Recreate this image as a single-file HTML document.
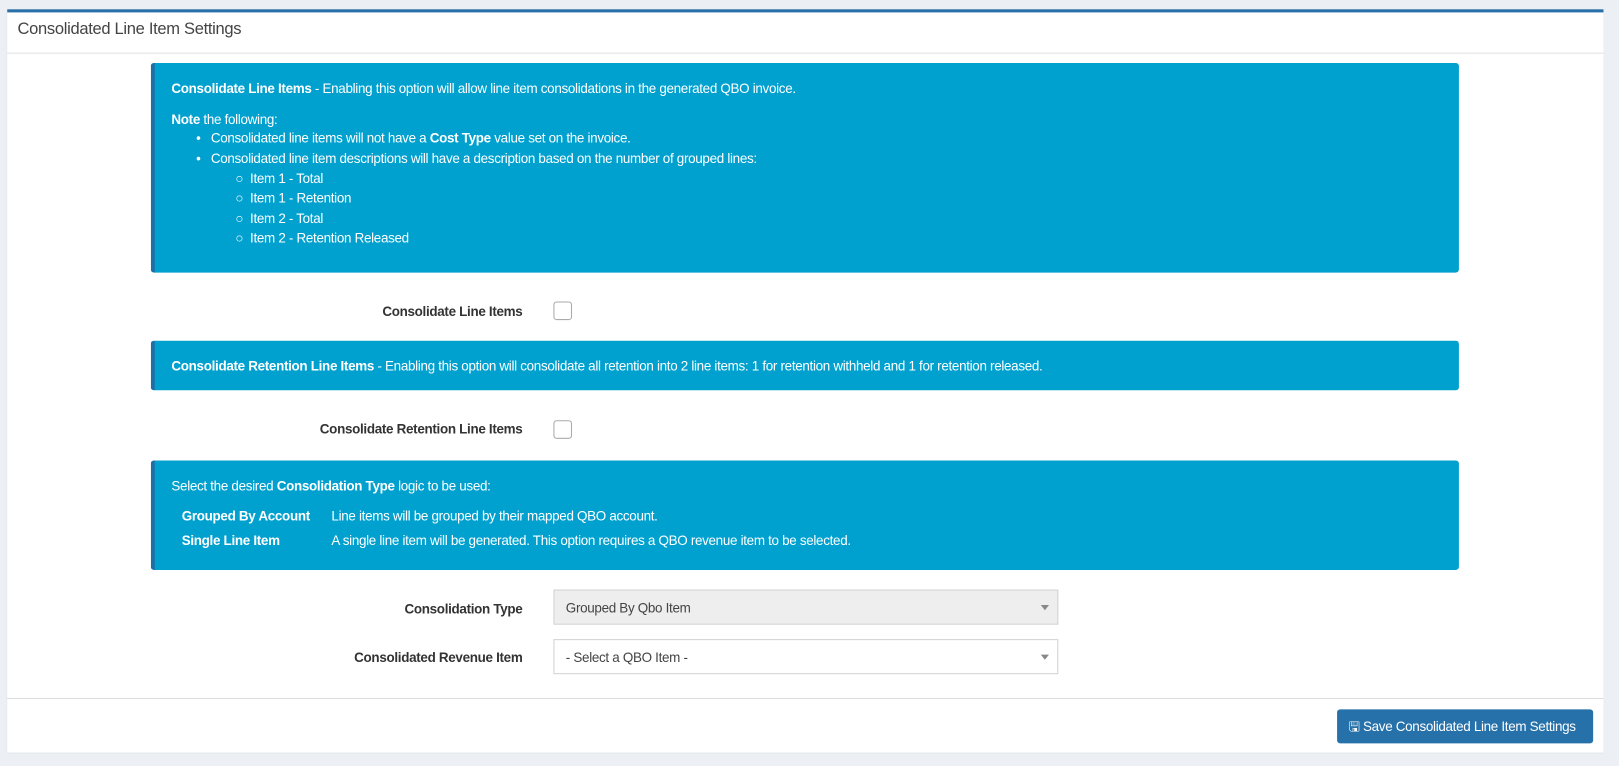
<!DOCTYPE html>
<html><head><meta charset="utf-8"><style>
*{box-sizing:border-box;margin:0;padding:0}
html,body{width:1619px;height:766px;overflow:hidden;background:#ecf0f5}
#w{width:1568px;height:742px;transform:scale(1.0325);transform-origin:0 0;position:relative;font-family:"Liberation Sans",sans-serif;font-size:13px;color:#333;letter-spacing:-0.3px}
.panel{position:absolute;left:7px;top:9px;width:1546px;height:720px;background:#fff;border-top:3px solid #2a6fa8;box-shadow:0 1px 1px rgba(0,0,0,.1)}
.hdr{position:absolute;left:0;top:0;width:100%;height:40px;border-bottom:1px solid #e2e2e2;font-size:16px;padding:8px 10px;color:#444}
.co{position:absolute;left:139px;width:1267px;background:#00a1cf;border-left:4px solid #1f6fa6;border-radius:3px;color:#fff;padding:0 16px}
.co b{font-weight:bold}
.abs{position:absolute;white-space:nowrap}
.lbl{position:absolute;right:1047px;font-weight:bold;color:#333;text-align:right}
.cb{position:absolute;left:529px;width:18px;height:18px;border:1px solid #aaa;border-radius:3px;background:#fff}
.sel{position:absolute;left:529px;width:489px;height:34px;border:1px solid #d2d2d2;padding:9px 11px;color:#444}
.sel:after{content:"";position:absolute;right:8px;top:14px;border:4px solid transparent;border-top:5px solid #888}
.foot{position:absolute;left:0;top:664px;width:100%;border-top:1px solid #ddd}
.btn{position:absolute;left:1288px;top:675px;width:248px;height:33px;background:#2771aa;border-radius:3px;color:#fff;font-size:13px;padding:8px 0 0 11px;white-space:nowrap}
</style></head><body><div id="w">
<div class="panel">
<div class="hdr">Consolidated Line Item Settings</div>
<div class="co" style="top:49px;height:203px">
<div class="abs" style="top:17px;left:16px"><b>Consolidate Line Items</b> - Enabling this option will allow line item consolidations in the generated QBO invoice.</div>
<div class="abs" style="top:47px;left:16px"><b>Note</b> the following:</div>
<div class="abs" style="top:65px;left:40px">•&nbsp;&nbsp;&nbsp;Consolidated line items will not have a <b>Cost Type</b> value set on the invoice.</div>
<div class="abs" style="top:85px;left:40px">•&nbsp;&nbsp;&nbsp;Consolidated line item descriptions will have a description based on the number of grouped lines:</div>
<div class="abs" style="top:104px;left:78px">○&nbsp;&nbsp;Item 1 - Total</div>
<div class="abs" style="top:123px;left:78px">○&nbsp;&nbsp;Item 1 - Retention</div>
<div class="abs" style="top:143px;left:78px">○&nbsp;&nbsp;Item 2 - Total</div>
<div class="abs" style="top:162px;left:78px">○&nbsp;&nbsp;Item 2 - Retention Released</div>
</div>
<div class="lbl" style="top:282px">Consolidate Line Items</div>
<div class="cb" style="top:280px"></div>
<div class="co" style="top:318px;height:48px">
<div class="abs" style="top:17px;left:16px"><b>Consolidate Retention Line Items</b> - Enabling this option will consolidate all retention into 2 line items: 1 for retention withheld and 1 for retention released.</div>
</div>
<div class="lbl" style="top:396px">Consolidate Retention Line Items</div>
<div class="cb" style="top:395px"></div>
<div class="co" style="top:434px;height:106px">
<div class="abs" style="top:17px;left:16px">Select the desired <b>Consolidation Type</b> logic to be used:</div>
<div class="abs" style="top:46px;left:26px"><b>Grouped By Account</b></div>
<div class="abs" style="top:46px;left:171px">Line items will be grouped by their mapped QBO account.</div>
<div class="abs" style="top:70px;left:26px"><b>Single Line Item</b></div>
<div class="abs" style="top:70px;left:171px">A single line item will be generated. This option requires a QBO revenue item to be selected.</div>
</div>
<div class="lbl" style="top:570px">Consolidation Type</div>
<div class="sel" style="top:559px;background:#eee">Grouped By Qbo Item</div>
<div class="lbl" style="top:617px">Consolidated Revenue Item</div>
<div class="sel" style="top:607px;background:#fff">- Select a QBO Item -</div>
<div class="foot"></div>
<div class="btn">🖫 Save Consolidated Line Item Settings</div>
</div>
</div></body></html>
